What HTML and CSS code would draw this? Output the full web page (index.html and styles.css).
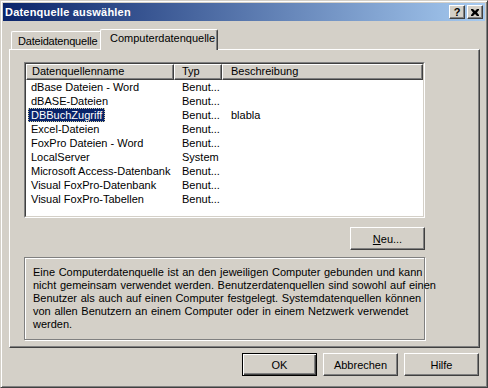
FILE: index.html
```html
<!DOCTYPE html>
<html lang="de">
<head>
  <meta charset="UTF-8">
  <meta name="viewport" content="width=device-width, initial-scale=1.0">
  <title>Datenquelle auswählen</title>
  <link rel="stylesheet" href="styles.css">
</head>
<body>
  <div class="window">
    <div class="titlebar">
      <span class="title">Datenquelle auswählen</span>
      <div class="caption-buttons">
        <button class="cap-btn help">?</button>
        <button class="cap-btn close">
          <svg width="8" height="7" viewBox="0 0 8 7">
            <path d="M0 0h2l2 2 2-2h2v1L6 3.5 8 6v1H6L4 5 2 7H0V6l2-2.5L0 1z" fill="#000"/>
          </svg>
        </button>
      </div>
    </div>

    <div class="dialog-body">
      <div class="tabs">
        <div class="tab">Dateidatenquelle</div>
        <div class="tab active">Computerdatenquelle</div>
      </div>

      <div class="panel">
        <div class="panel-inner">
          <div class="listview">
            <div class="listview-frame">
              <div class="lv-header">
                <div class="lv-col">Datenquellenname</div>
                <div class="lv-col">Typ</div>
                <div class="lv-col">Beschreibung</div>
              </div>
              <div class="lv-row"><div class="lv-cell"><span>dBase Dateien - Word</span></div><div class="lv-cell">Benut...</div><div class="lv-cell"></div></div>
              <div class="lv-row"><div class="lv-cell"><span>dBASE-Dateien</span></div><div class="lv-cell">Benut...</div><div class="lv-cell"></div></div>
              <div class="lv-row selected"><div class="lv-cell"><span>DBBuchZugriff</span></div><div class="lv-cell">Benut...</div><div class="lv-cell">blabla</div></div>
              <div class="lv-row"><div class="lv-cell"><span>Excel-Dateien</span></div><div class="lv-cell">Benut...</div><div class="lv-cell"></div></div>
              <div class="lv-row"><div class="lv-cell"><span>FoxPro Dateien - Word</span></div><div class="lv-cell">Benut...</div><div class="lv-cell"></div></div>
              <div class="lv-row"><div class="lv-cell"><span>LocalServer</span></div><div class="lv-cell">System</div><div class="lv-cell"></div></div>
              <div class="lv-row"><div class="lv-cell"><span>Microsoft Access-Datenbank</span></div><div class="lv-cell">Benut...</div><div class="lv-cell"></div></div>
              <div class="lv-row"><div class="lv-cell"><span>Visual FoxPro-Datenbank</span></div><div class="lv-cell">Benut...</div><div class="lv-cell"></div></div>
              <div class="lv-row"><div class="lv-cell"><span>Visual FoxPro-Tabellen</span></div><div class="lv-cell">Benut...</div><div class="lv-cell"></div></div>
            </div>
          </div>

          <div class="panel-actions">
            <button class="btn"><u>N</u>eu...</button>
          </div>

          <div class="info">
            Eine Computerdatenquelle ist an den jeweiligen Computer gebunden und kann<br>
            nicht gemeinsam verwendet werden. Benutzerdatenquellen sind sowohl auf einen<br>
            Benutzer als auch auf einen Computer festgelegt. Systemdatenquellen können<br>
            von allen Benutzern an einem Computer oder in einem Netzwerk verwendet<br>
            werden.
          </div>
        </div>
      </div>

      <div class="dialog-buttons">
        <button class="btn default">OK</button>
        <button class="btn">Abbrechen</button>
        <button class="btn">Hilfe</button>
      </div>
    </div>
  </div>
</body>
</html>
```

FILE: styles.css
```css
body {
  margin: 0;
  background-color: #d4d0c8;
  font-family: "Liberation Sans", Arial, sans-serif;
  font-size: 11px;
  color: #000;
}

.window {
  width: 488px;
  height: 388px;
  box-sizing: border-box;
  padding: 2px;
  border: 1px solid;
  border-color: #d4d0c8 #404040 #404040 #d4d0c8;
  box-shadow: inset 1px 1px #fff, inset -1px -1px #808080;
  background-color: #d4d0c8;
}

/* title bar */
.titlebar {
  height: 18px;
  display: flex;
  align-items: center;
  justify-content: space-between;
  padding: 0 2px 0 2px;
  background: linear-gradient(to right, #0a246a, #a6caf0);
}

.title {
  color: #fff;
  font-weight: bold;
  font-size: 11px;
  letter-spacing: 0.2px;
}

.caption-buttons {
  display: flex;
  gap: 2px;
}

.cap-btn {
  width: 16px;
  height: 14px;
  padding: 0;
  box-sizing: border-box;
  display: flex;
  align-items: center;
  justify-content: center;
  background-color: #d4d0c8;
  border: 1px solid;
  border-color: #fff #404040 #404040 #fff;
  box-shadow: inset -1px -1px #808080;
  font-family: "Liberation Sans", Arial, sans-serif;
  font-weight: bold;
  font-size: 11px;
  line-height: 12px;
}

/* dialog body */
.dialog-body {
  padding: 8px 5px 0 6px;
}

.tabs {
  display: flex;
  align-items: flex-end;
  height: 20px;
  padding-left: 2px;
  position: relative;
  z-index: 1;
}

.tab {
  height: 18px;
  box-sizing: border-box;
  padding: 2px 0 0 6px;
  width: 91px;
  border: 1px solid;
  border-bottom: none;
  border-color: #fff #404040 #fff #fff;
  border-top-left-radius: 2px;
  border-top-right-radius: 2px;
  box-shadow: inset -1px 0 #808080;
  line-height: 14px;
  white-space: nowrap;
  letter-spacing: -0.2px;
}

.tab.active {
  height: 21px;
  width: 118px;
  margin-left: -2px;
  margin-bottom: -1px;
  padding: 1px 0 0 9px;
  background-color: #d4d0c8;
  position: relative;
  letter-spacing: 0;
}

.panel {
  height: 299px;
  box-sizing: border-box;
  border: 1px solid;
  border-color: #fff #404040 #404040 #fff;
  box-shadow: inset -1px -1px #808080;
  padding: 12px 0 0 14px;
}

.panel-inner {
  width: 401px;
}

/* list view */
.listview {
  height: 156px;
  box-sizing: border-box;
  border: 1px solid;
  border-color: #808080 #fff #fff #808080;
}

.listview-frame {
  height: 100%;
  box-sizing: border-box;
  border: 1px solid;
  border-color: #404040 #d4d0c8 #d4d0c8 #404040;
  background-color: #fff;
}

.lv-header,
.lv-row {
  display: grid;
  grid-template-columns: 148px 48px 1fr;
}

.lv-col {
  height: 16px;
  box-sizing: border-box;
  border: 1px solid;
  border-color: #fff #404040 #404040 #fff;
  box-shadow: inset -1px -1px #808080;
  background-color: #d4d0c8;
  line-height: 13px;
  white-space: nowrap;
}

.lv-col:nth-child(1) { padding-left: 5px; }
.lv-col:nth-child(2) { padding-left: 7px; }
.lv-col:nth-child(3) { padding-left: 8px; }

.lv-row {
  height: 14px;
  line-height: 14px;
  white-space: nowrap;
}

.lv-cell:nth-child(1) { padding-left: 2px; }
.lv-cell:nth-child(2) { padding-left: 8px; }
.lv-cell:nth-child(3) { padding-left: 9px; }

.lv-cell span {
  display: inline-block;
  padding: 0 3px;
}

.lv-row.selected span {
  background-color: #0a246a;
  color: #fff;
  outline: 1px dotted #d4d0a0;
  outline-offset: -1px;
}

/* buttons */
.btn {
  width: 75px;
  height: 23px;
  box-sizing: border-box;
  padding: 0;
  background-color: #d4d0c8;
  border: 1px solid;
  border-color: #fff #404040 #404040 #fff;
  box-shadow: inset -1px -1px #808080;
  font-family: "Liberation Sans", Arial, sans-serif;
  font-size: 11px;
  color: #000;
}

.btn.default {
  border: 1px solid #000;
  box-shadow: inset 1px 1px #fff, inset -1px -1px #404040, inset -2px -2px #808080;
}

.panel-actions {
  display: flex;
  justify-content: flex-end;
  margin-top: 9px;
}

.info {
  margin-top: 7px;
  height: 83px;
  box-sizing: border-box;
  border: 1px solid #808080;
  box-shadow: inset 1px 1px #fff, 1px 1px #fff;
  padding: 8px 0 0 8px;
  line-height: 13px;
  white-space: nowrap;
  word-spacing: 0.6px;
}

.dialog-buttons {
  display: flex;
  justify-content: flex-end;
  gap: 6px;
  margin-top: 5px;
  padding-right: 1px;
}
```
